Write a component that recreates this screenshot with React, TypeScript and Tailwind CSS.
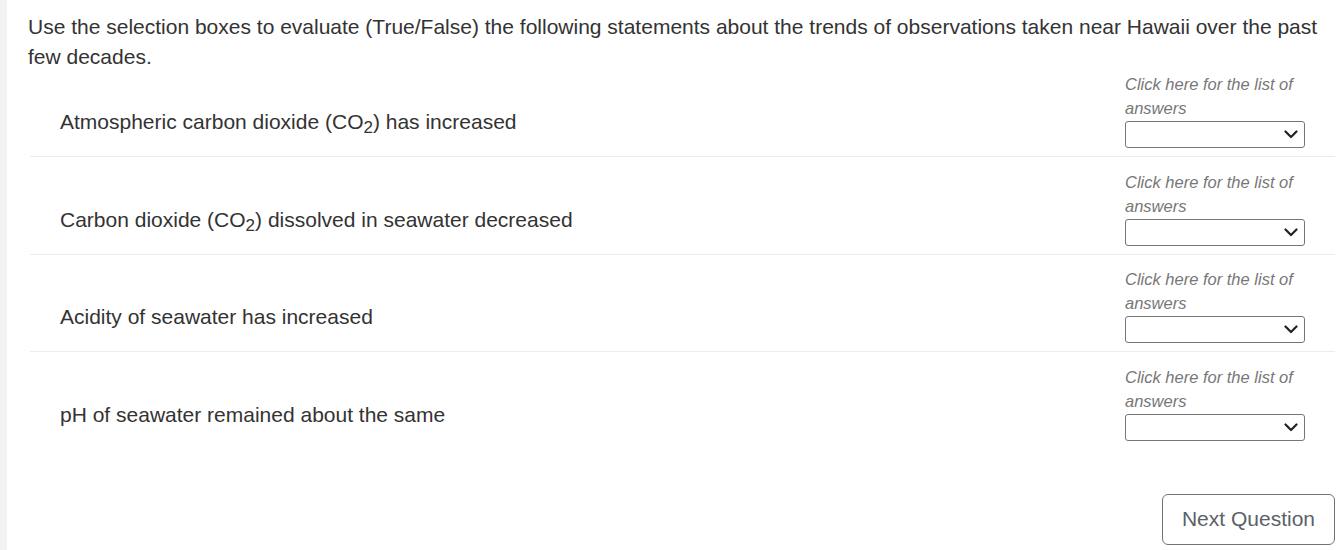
const statements = [
  { id: 1, before: "Atmospheric carbon dioxide (CO", sub: "2", after: ") has increased" },
  { id: 2, before: "Carbon dioxide (CO", sub: "2", after: ") dissolved in seawater decreased" },
  { id: 3, before: "Acidity of seawater has increased", sub: "", after: "" },
  { id: 4, before: "pH of seawater remained about the same", sub: "", after: "" },
];

function AnswerSelect() {
  return (
    <div className="w-[180px] shrink-0">
      <p className="text-[16.5px] leading-[24px] italic text-[#777777]">
        Click here for the list of answers
      </p>
      <div className="mt-px flex h-[27px] w-[180px] items-center justify-end rounded-[3px] border border-[#767676] bg-white pr-[6px]">
        <svg width="14" height="9" viewBox="0 0 14 9" fill="none">
          <polyline points="1.5,1.5 7,7 12.5,1.5" stroke="#222" strokeWidth="2.2" strokeLinecap="round" strokeLinejoin="round" />
        </svg>
      </div>
    </div>
  );
}

export default function App() {
  return (
    <div
      className="flex min-h-[550px] bg-white text-[#333333]"
      style={{ fontFamily: '"Liberation Sans", Arial, sans-serif' }}
    >
      <div className="w-[7px] shrink-0 bg-[#f2f2f2]" />
      <div className="flex-1 pl-[21px] pr-[7px] pt-[12px]">
        <p className="-mb-[12.5px] text-[21px] leading-[30px]">
          Use the selection boxes to evaluate (True/False) the following statements about the trends of
          observations taken near Hawaii over the past few decades.
        </p>

        <div className="ml-[2px]">
          {statements.map((s, i) => (
            <div
              key={s.id}
              className={`flex items-end justify-between pb-[8px] pl-[30px] pr-[30px] pt-[12.5px] ${
                i < statements.length - 1 ? "border-b border-[#ececec]" : ""
              }`}
            >
              <div className="mb-[13px] text-[21px] leading-[26px]">
                {s.before}
                {s.sub && <sub className="text-[17px]">{s.sub}</sub>}
                {s.after}
              </div>
              <AnswerSelect />
            </div>
          ))}
        </div>

        <div className="mt-[45px] flex justify-end">
          <button
            type="button"
            className="h-[51px] w-[173px] rounded-[6px] border border-[#6c757d] bg-white text-[21px] text-[#5a6268]"
          >
            Next Question
          </button>
        </div>
      </div>
    </div>
  );
}
